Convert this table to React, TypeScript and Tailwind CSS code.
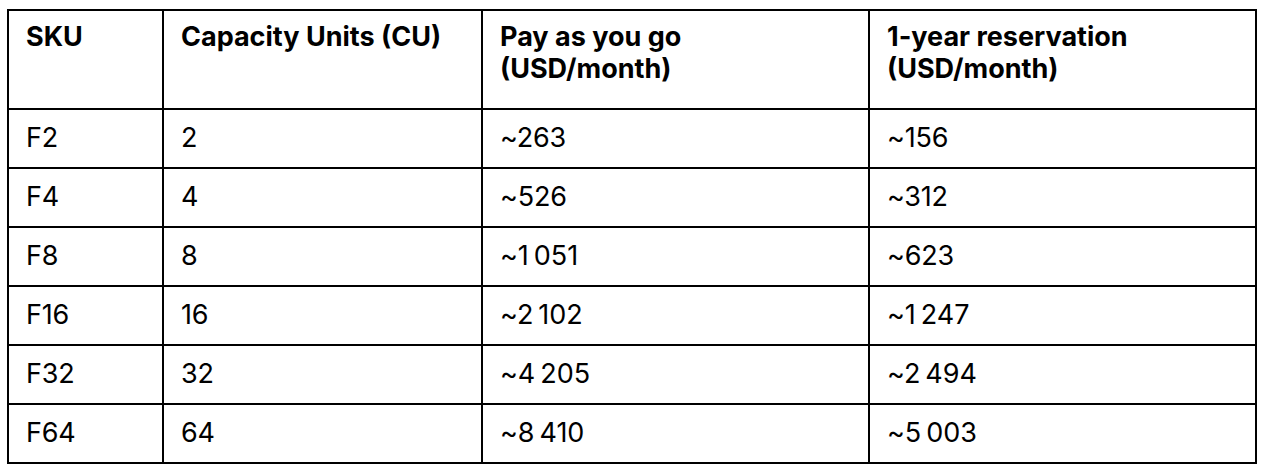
const HEADERS = ['SKU', 'Capacity Units (CU)', 'Pay as you go\n(USD/month)', '1-year reservation\n(USD/month)'];

const ROWS = [
    ['F2', '2', '~263', '~156'],
    ['F4', '4', '~526', '~312'],
    ['F8', '8', '~1\u202F051', '~623'],
    ['F16', '16', '~2\u202F102', '~1\u202F247'],
    ['F32', '32', '~4\u202F205', '~2\u202F494'],
    ['F64', '64', '~8\u202F410', '~5\u202F003'],
];

export default function App() {
    return (
        <div className="min-h-screen bg-white pl-[7px] pt-[9px] font-['Inter',sans-serif] text-black">
            <table className="w-[1248px] table-fixed border-collapse border-2 border-black text-[27px] leading-[32px]">
                <colgroup>
                    <col className="w-[155px]"/>
                    <col className="w-[319px]"/>
                    <col className="w-[387px]"/>
                    <col className="w-[387px]"/>
                </colgroup>
                <thead>
                <tr className="h-[99px]">
                    {HEADERS.map((h) => (
                        <th
                            key={h}
                            className="whitespace-pre-line border-2 border-black pl-[17px] pt-[10px] text-left align-top font-bold"
                        >
                            {h}
                        </th>
                    ))}
                </tr>
                </thead>
                <tbody>
                {ROWS.map((row) => (
                    <tr key={row[0]} className="h-[59px]">
                        {row.map((cell, i) => (
                            <td key={i} className="border-2 border-black pl-[17px] pt-[12px] align-top tracking-[-0.2px]">
                                {cell}
                            </td>
                        ))}
                    </tr>
                ))}
                </tbody>
            </table>
        </div>
    );
}
